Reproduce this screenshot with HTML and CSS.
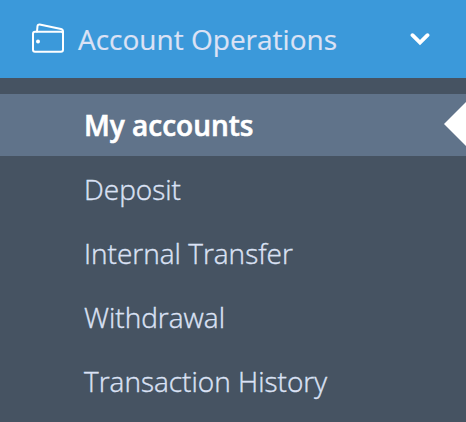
FILE: index.html
```html
<!DOCTYPE html>
<html lang="en">
<head>
    <meta charset="UTF-8">
    <meta name="viewport" content="width=device-width, initial-scale=1.0">
    <title>Account Operations</title>
    <link rel="stylesheet" href="styles.css">
</head>
<body>
    <nav class="sidebar">
        <a class="menu-header" href="#">
            <svg class="wallet" width="34" height="32" viewBox="0 0 34 32">
                <rect x="2" y="8.700" width="30" height="20" rx="2"/>
                <path d="M6 8.500L6.500 3.200Q6.800 1.300 8.700 1.600L30 6Q32 6.500 32 8.500V11"/>
                <circle class="clasp" cx="7" cy="18.500" r="2"/>
            </svg>
            <span class="menu-title">Account Operations</span>
            <svg class="chevron" width="20" height="14" viewBox="0 0 20 14">
                <path d="M2.500 3.200l7.500 7.300 7.500-7.300"/>
            </svg>
        </a>
        <ul class="sub-menu">
            <li class="active"><a href="#">My accounts</a></li>
            <li><a href="#">Deposit</a></li>
            <li><a href="#">Internal Transfer</a></li>
            <li><a href="#">Withdrawal</a></li>
            <li><a href="#">Transaction History</a></li>
        </ul>
    </nav>
</body>
</html>
```

FILE: styles.css
```css
body {
    margin: 0;
    background-color: #465362;
    font-family: "Open Sans", sans-serif;
    font-size: 28px;
    overflow: hidden;
}
a {
    color: inherit;
    text-decoration: none;
}
.menu-header {
    display: flex;
    align-items: center;
    box-sizing: border-box;
    height: 78px;
    padding: 0 36px 0 31px;
    background-color: #3b99da;
    color: #dbe2f5;
    -webkit-text-stroke: 0.2px;
}
.menu-header svg {
    fill: none;
    stroke: #fff;
    stroke-width: 2;
    stroke-linecap: round;
    stroke-linejoin: round;
}
.menu-header .clasp {
    fill: #fff;
    stroke: none;
}
.menu-title {
    flex: 1;
    margin-left: 13px;
}
.menu-header .chevron {
    stroke-width: 3.800;
    stroke-linejoin: miter;
}
.sub-menu {
    list-style: none;
    margin: 0;
    padding: 16px 0 0;
    color: #dbe2f5;
    font-weight: 300;
    -webkit-text-stroke: 0.4px;
}
.sub-menu li {
    position: relative;
    height: 62px;
    margin-bottom: 2px;
    padding-left: 84px;
    line-height: 62px;
}
.sub-menu .active {
    background-color: #60738a;
    color: #fff;
    font-weight: 600;
    -webkit-text-stroke: 0.6px;
}
/* arrow pointing back at the selected item */
.active::after {
    content: "";
    position: absolute;
    top: 8px;
    right: 0;
    border: 22px solid transparent;
    border-right-color: #fff;
    border-left: 0;
}
```
